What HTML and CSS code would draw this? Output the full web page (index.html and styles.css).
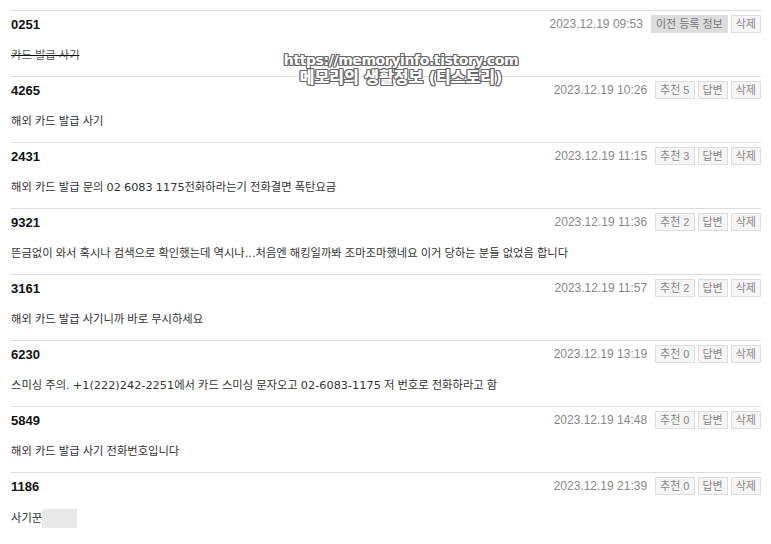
FILE: index.html
```html
<!DOCTYPE html>
<html lang="ko">
<head>
<meta charset="UTF-8" />
<meta name="viewport" content="width=device-width, initial-scale=1" />
<title>방명록</title>
<link rel="stylesheet" href="styles.css">
</head>
<body>

  <ul class="comment-list">
    <li class="comment">
      <div class="comment-head">
        <strong class="name">0251</strong>
        <span class="date">2023.12.19 09:53</span>
        <span class="btn btn-dark">이전 등록 정보</span>
        <span class="btn">삭제</span>
      </div>
      <p class="text"><del>카드 발급 사기</del></p>
    </li>
    <li class="comment">
      <div class="comment-head">
        <strong class="name">4265</strong>
        <span class="date">2023.12.19 10:26</span>
        <span class="btn">추천 5</span>
        <span class="btn">답변</span>
        <span class="btn">삭제</span>
      </div>
      <p class="text">해외 카드 발급 사기</p>
    </li>
    <li class="comment">
      <div class="comment-head">
        <strong class="name">2431</strong>
        <span class="date">2023.12.19 11:15</span>
        <span class="btn">추천 3</span>
        <span class="btn">답변</span>
        <span class="btn">삭제</span>
      </div>
      <p class="text">해외 카드 발급 문의 02 6083 1175전화하라는기 전화결면 폭탄요금</p>
    </li>
    <li class="comment">
      <div class="comment-head">
        <strong class="name">9321</strong>
        <span class="date">2023.12.19 11:36</span>
        <span class="btn">추천 2</span>
        <span class="btn">답변</span>
        <span class="btn">삭제</span>
      </div>
      <p class="text">뜬금없이 와서 혹시나 검색으로 확인했는데 역시나...처음엔 해킹일까봐 조마조마했네요 이거 당하는 분들 없었음 합니다</p>
    </li>
    <li class="comment">
      <div class="comment-head">
        <strong class="name">3161</strong>
        <span class="date">2023.12.19 11:57</span>
        <span class="btn">추천 2</span>
        <span class="btn">답변</span>
        <span class="btn">삭제</span>
      </div>
      <p class="text">해외 카드 발급 사기니까 바로 무시하세요</p>
    </li>
    <li class="comment">
      <div class="comment-head">
        <strong class="name">6230</strong>
        <span class="date">2023.12.19 13:19</span>
        <span class="btn">추천 0</span>
        <span class="btn">답변</span>
        <span class="btn">삭제</span>
      </div>
      <p class="text">스미싱 주의. +1(222)242-2251에서 카드 스미싱 문자오고 02-6083-1175 저 번호로 전화하라고 함</p>
    </li>
    <li class="comment">
      <div class="comment-head">
        <strong class="name">5849</strong>
        <span class="date">2023.12.19 14:48</span>
        <span class="btn">추천 0</span>
        <span class="btn">답변</span>
        <span class="btn">삭제</span>
      </div>
      <p class="text">해외 카드 발급 사기 전화번호입니다</p>
    </li>
    <li class="comment">
      <div class="comment-head">
        <strong class="name">1186</strong>
        <span class="date">2023.12.19 21:39</span>
        <span class="btn">추천 0</span>
        <span class="btn">답변</span>
        <span class="btn">삭제</span>
      </div>
      <p class="text">사기꾼 <span class="masked"></span></p>
    </li>
  </ul>

  <div class="watermark">
    <div class="wm-url">https://memoryinfo.tistory.com</div>
    <div class="wm-name">메모리의 생활정보 (티스토리)</div>
  </div>

</body>
</html>
```

FILE: styles.css
```css
body {
  margin: 0;
  padding: 10px 10px 0 11px;
  background: #fff;
  font-family: "Liberation Sans", "Noto Sans CJK KR", sans-serif;
  color: #333;
  position: relative;
}
.comment-list {
  list-style: none;
  margin: 0;
  padding: 0;
}
.comment {
  border-top: 1px solid #ddd;
  padding: 4px 0 11px;
}
.comment-head {
  display: flex;
  align-items: center;
  gap: 3px;
  height: 18px;
}
.name {
  font-size: 13px;
  font-weight: bold;
  color: #111;
  margin-right: auto;
}
.date {
  font-size: 12px;
  color: #888;
  margin-right: 5px;
}
.btn {
  font-size: 11px;
  color: #888;
  background: #f5f5f5;
  border: 1px solid #ddd;
  height: 16px;
  line-height: 16px;
  padding: 0 4px;
}
.btn-dark {
  background: #ddd;
  border-color: #ddd;
  color: #777;
}
.text {
  margin: 14px 0 0;
  font-family: "DejaVu Sans", "Noto Sans CJK KR", sans-serif;
  font-size: 11.3px;
  line-height: 18px;
  word-spacing: -0.5px;
  color: #333;
}
.text del {
  color: #555;
  text-decoration-color: #111;
}
.masked {
  display: inline-block;
  width: 35px;
  height: 19px;
  background: #e8e8e8;
  vertical-align: middle;
  margin-left: -3px;
}
.watermark {
  position: absolute;
  left: 271px;
  top: 52px;
  width: 260px;
  text-align: center;
  font-family: "DejaVu Sans", "Noto Sans CJK KR", sans-serif;
  font-weight: bold;
  color: #fff;
  text-shadow: -1px -1px 0 #666, 1px -1px 0 #666, -1px 1px 0 #666, 1px 1px 0 #666,
    0 -1px 0 #666, 0 1px 0 #666, -1px 0 0 #666, 1px 0 0 #666;
}
.wm-url {
  font-size: 14px;
  line-height: 16px;
  letter-spacing: -0.4px;
}
.wm-name {
  font-size: 16px;
  line-height: 20px;
  font-weight: 900;
}
```
